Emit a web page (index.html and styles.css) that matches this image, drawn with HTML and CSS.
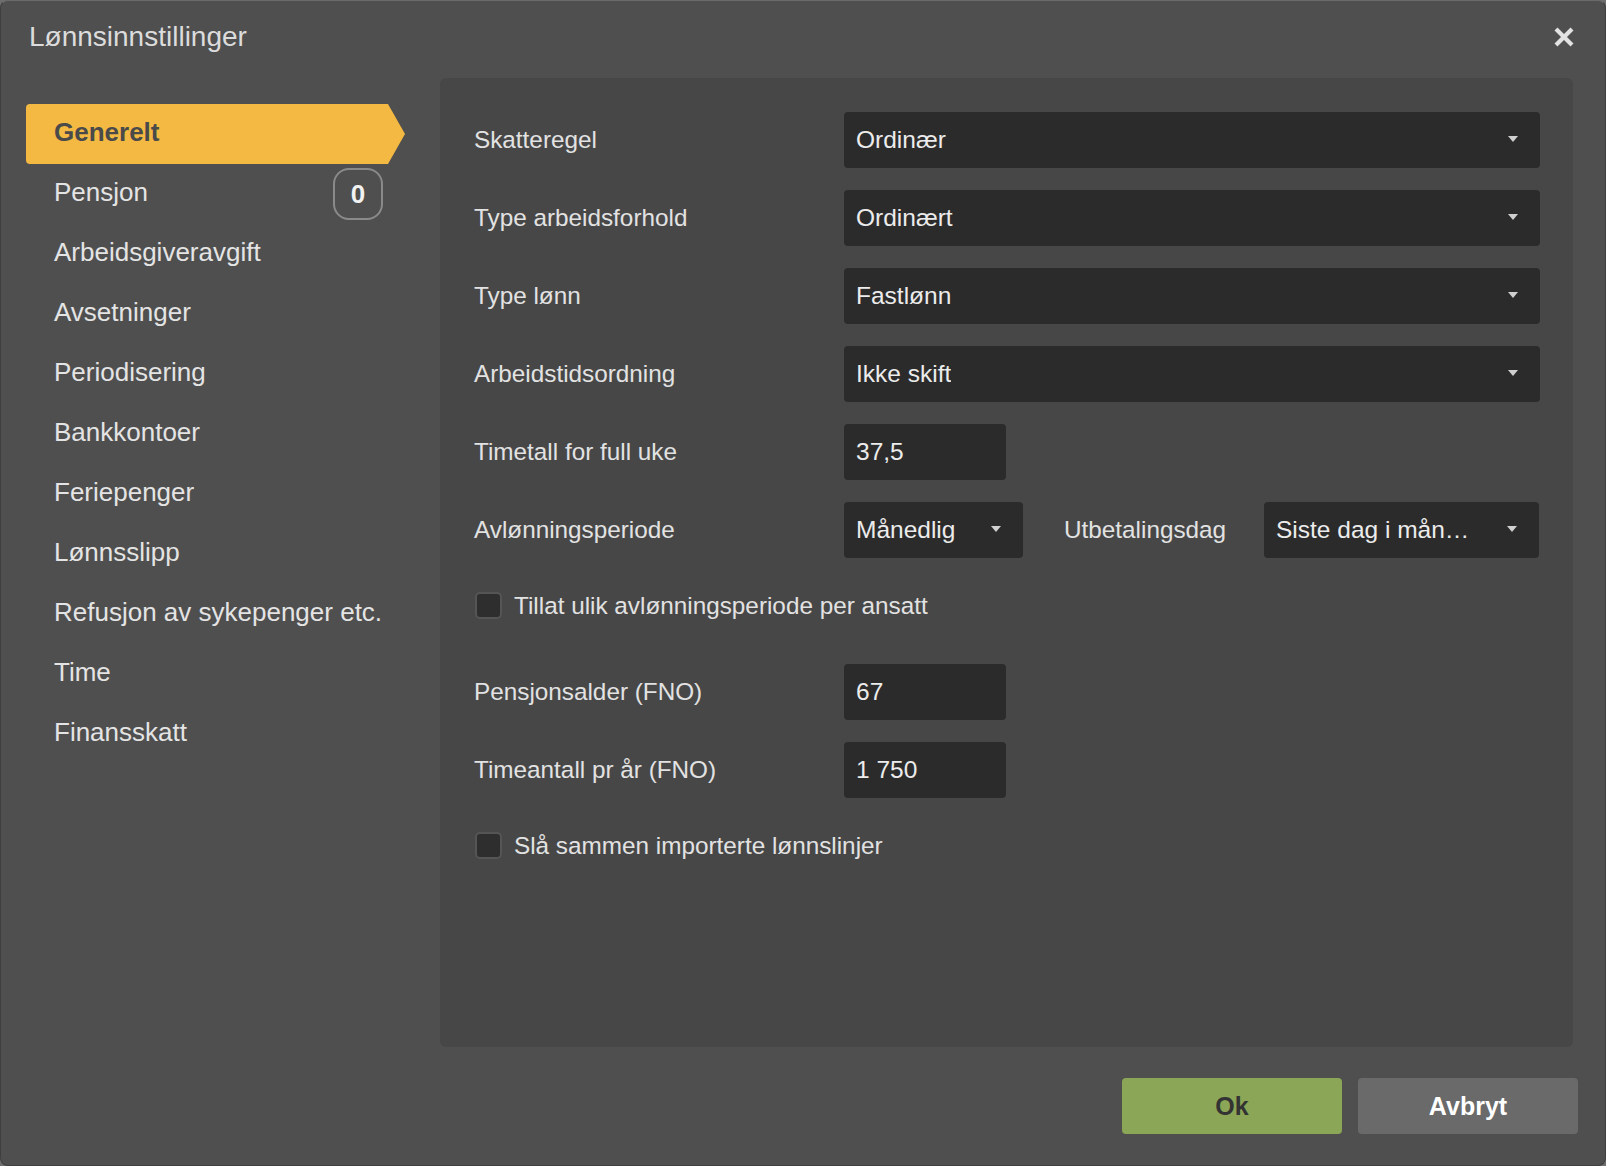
FILE: index.html
```html
<!DOCTYPE html>
<html lang="no">
<head>
  <meta charset="UTF-8">
  <meta name="viewport" content="width=device-width, initial-scale=1.0">
  <title>Lønnsinnstillinger</title>
  <link rel="stylesheet" href="styles.css">
</head>
<body>
  <div class="dialog">
    <div class="dialog-header">
      <h1 class="dialog-title">Lønnsinnstillinger</h1>
      <button class="close-btn" aria-label="Lukk">
        <svg width="20" height="20" viewBox="0 0 20 20">
          <path d="M2 2 L18 18 M18 2 L2 18" stroke="currentColor" stroke-width="4.2" fill="none"/>
        </svg>
      </button>
    </div>

    <div class="dialog-body">
      <ul class="tabs">
        <li class="tab active">Generelt</li>
        <li class="tab">Pensjon <span class="badge">0</span></li>
        <li class="tab">Arbeidsgiveravgift</li>
        <li class="tab">Avsetninger</li>
        <li class="tab">Periodisering</li>
        <li class="tab">Bankkontoer</li>
        <li class="tab">Feriepenger</li>
        <li class="tab">Lønnsslipp</li>
        <li class="tab">Refusjon av sykepenger etc.</li>
        <li class="tab">Time</li>
        <li class="tab">Finansskatt</li>
      </ul>

      <div class="panel">
        <div class="row">
          <label class="label">Skatteregel</label>
          <div class="select full"><span class="value">Ordinær</span><span class="caret"></span></div>
        </div>
        <div class="row">
          <label class="label">Type arbeidsforhold</label>
          <div class="select full"><span class="value">Ordinært</span><span class="caret"></span></div>
        </div>
        <div class="row">
          <label class="label">Type lønn</label>
          <div class="select full"><span class="value">Fastlønn</span><span class="caret"></span></div>
        </div>
        <div class="row">
          <label class="label">Arbeidstidsordning</label>
          <div class="select full"><span class="value">Ikke skift</span><span class="caret"></span></div>
        </div>
        <div class="row">
          <label class="label">Timetall for full uke</label>
          <div class="input short">37,5</div>
        </div>
        <div class="row">
          <label class="label">Avlønningsperiode</label>
          <div class="select period"><span class="value">Månedlig</span><span class="caret"></span></div>
          <label class="label inline">Utbetalingsdag</label>
          <div class="select payday"><span class="value">Siste dag i mån…</span><span class="caret"></span></div>
        </div>
        <div class="check-row">
          <span class="checkbox"></span>
          <span class="check-label">Tillat ulik avlønningsperiode per ansatt</span>
        </div>
        <div class="row">
          <label class="label">Pensjonsalder (FNO)</label>
          <div class="input short">67</div>
        </div>
        <div class="row">
          <label class="label">Timeantall pr år (FNO)</label>
          <div class="input short">1 750</div>
        </div>
        <div class="check-row">
          <span class="checkbox"></span>
          <span class="check-label">Slå sammen importerte lønnslinjer</span>
        </div>
      </div>
    </div>

    <div class="dialog-footer">
      <button class="btn btn-ok">Ok</button>
      <button class="btn btn-cancel">Avbryt</button>
    </div>
  </div>
</body>
</html>
```

FILE: styles.css
```css
:root {
  --dialog-bg: #4f4f4f;
  --panel-bg: #474747;
  --field-bg: #2b2b2b;
  --text: #e4e4e4;
  --accent: #f4b942;
  --ok: #8ba656;
  --cancel: #6a6a6a;
}

* {
  box-sizing: border-box;
}

body {
  margin: 0;
  background-color: #6e6e6e;
  font-family: "Liberation Sans", Arial, sans-serif;
  color: var(--text);
}

.dialog {
  width: 1606px;
  height: 1166px;
  display: flex;
  flex-direction: column;
  background-color: var(--dialog-bg);
  border: 1px solid #3f3f3f;
  border-top-color: #6a6a6a;
  border-radius: 8px;
}

/* Header */
.dialog-header {
  height: 77px;
  display: flex;
  align-items: center;
  justify-content: space-between;
  padding: 0 31px 6px 28px;
}

.dialog-title {
  margin: 0;
  font-size: 28px;
  font-weight: normal;
  color: #dcdcdc;
}

.close-btn {
  background: none;
  border: none;
  padding: 0;
  color: #e2e2e2;
  display: flex;
  cursor: pointer;
}

/* Body */
.dialog-body {
  display: flex;
  height: 969px;
}

.tabs {
  list-style: none;
  margin: 0;
  padding: 26px 0 0 25px;
  width: 439px;
  flex: none;
}

.tab {
  width: 379px;
  height: 60px;
  display: flex;
  align-items: center;
  justify-content: space-between;
  padding: 0 22px 4px 28px;
  font-size: 26px;
  color: var(--text);
  cursor: pointer;
}

.tab.active {
  background-color: var(--accent);
  color: #4a4a4a;
  font-weight: bold;
  border-radius: 4px 0 0 4px;
  clip-path: polygon(0 0, calc(100% - 17px) 0, 100% 50%, calc(100% - 17px) 100%, 0 100%);
}

.badge {
  width: 50px;
  height: 52px;
  margin-top: 4px;
  display: flex;
  align-items: center;
  justify-content: center;
  border: 2px solid #8a8a8a;
  border-radius: 16px;
  font-weight: bold;
  color: #f2f2f2;
}

.panel {
  width: 1133px;
  flex: none;
  background-color: var(--panel-bg);
  border-radius: 6px;
  padding: 34px 33px 0 34px;
  display: flex;
  flex-direction: column;
  gap: 22px;
}

.row {
  display: flex;
  align-items: center;
  height: 56px;
}

.label {
  width: 370px;
  flex: none;
  font-size: 24.3px;
  color: #e2e2e2;
}

.label.inline {
  width: 241px;
  padding-left: 41px;
}

.select,
.input {
  height: 56px;
  background-color: var(--field-bg);
  border-radius: 4px;
  display: flex;
  align-items: center;
  padding: 0 12px;
  font-size: 24.5px;
  color: #ececec;
}

.select {
  justify-content: space-between;
  padding-right: 22px;
}

.select .value {
  white-space: nowrap;
  overflow: hidden;
}

.caret {
  width: 0;
  height: 0;
  border-left: 5px solid transparent;
  border-right: 5px solid transparent;
  border-top: 6px solid #d0d0d0;
  margin-top: -2px;
}

.full {
  width: 696px;
}

.short {
  width: 162px;
}

.period {
  width: 179px;
}

.payday {
  width: 275px;
}

.check-row {
  display: flex;
  align-items: center;
  height: 27px;
  margin: 12px 0 23px 1px;
}

.checkbox {
  width: 27px;
  height: 27px;
  border: 2px solid #555555;
  border-radius: 5px;
  background-color: #2e2e2e;
  margin-right: 12px;
}

.check-label {
  font-size: 24.3px;
  color: #e2e2e2;
}

/* Footer */
.dialog-footer {
  flex: 1;
  display: flex;
  justify-content: flex-end;
  gap: 16px;
  padding: 31px 27px 0 0;
}

.btn {
  width: 220px;
  height: 56px;
  border: none;
  border-radius: 4px;
  font-family: inherit;
  font-size: 25px;
  font-weight: bold;
  cursor: pointer;
}

.btn-ok {
  background-color: var(--ok);
  color: #333333;
}

.btn-cancel {
  background-color: var(--cancel);
  color: #ffffff;
}
```
